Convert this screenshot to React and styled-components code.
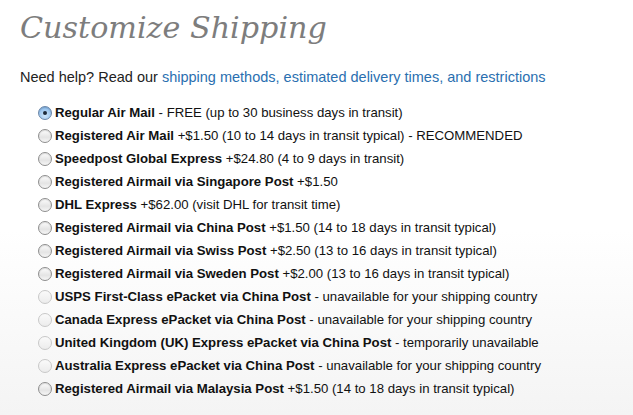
import React from "react";
import styled, { createGlobalStyle } from "styled-components";

const Global = createGlobalStyle`
  html, body { margin: 0; padding: 0; }
  body {
    width: 633px;
    height: 415px;
    overflow: hidden;
    background: linear-gradient(to bottom, #ffffff 0px, #ffffff 230px, #f4f4f4 415px);
    font-family: "Liberation Sans", Arial, sans-serif;
  }
`;

const Page = styled.div`
  padding: 7px 0 0 20px;
`;

const Title = styled.h1`
  margin: 0;
  font-family: "DejaVu Serif", Georgia, serif;
  font-style: italic;
  font-weight: normal;
  font-size: 30.2px;
  line-height: 42px;
  color: #7d7d7d;
`;

const Help = styled.p`
  margin: 19px 0 0 0;
  font-size: 14.5px;
  line-height: 18px;
  color: #222;
`;

const Link = styled.a`
  color: #2a6fb0;
  text-decoration: none;
`;

const List = styled.div`
  display: flex;
  flex-direction: column;
  margin: 15px 0 0 18px;
`;

const Row = styled.label`
  display: flex;
  align-items: center;
  height: 23px;
  font-size: 13.2px;
  color: #111;
  white-space: nowrap;
`;

const Text = styled.span``;

const Radio = styled.span`
  box-sizing: border-box;
  width: 14px;
  height: 14px;
  margin-right: 3px;
  border-radius: 50%;
  flex: none;
  position: relative;
  border: 1px solid ${(p) => (p.$checked ? "#6b86a8" : p.$disabled ? "#c8c8c8" : "#8e8e8e")};
  background: ${(p) =>
    p.$checked
      ? "radial-gradient(circle at 50% 70%, #cfe6fb 0%, #9cc6ef 60%, #6fa5dd 100%)"
      : p.$disabled
      ? "linear-gradient(to bottom, #fafafa, #ececec)"
      : "linear-gradient(to bottom, #fdfdfd 0%, #e4e4e4 60%, #f6f6f6 100%)"};
  box-shadow: ${(p) => (p.$disabled ? "none" : "inset 0 1px 1px rgba(0,0,0,0.12)")};
  &::after {
    content: "";
    display: ${(p) => (p.$checked ? "block" : "none")};
    position: absolute;
    left: 50%;
    top: 50%;
    width: 4px;
    height: 4px;
    margin: -2px 0 0 -2px;
    border-radius: 50%;
    background: #1d2a3a;
  }
`;

const Name = styled.b`
  font-weight: bold;
`;

const options = [
  { name: "Regular Air Mail", rest: " - FREE (up to 30 business days in transit)", checked: true },
  { name: "Registered Air Mail", rest: " +$1.50 (10 to 14 days in transit typical) - RECOMMENDED" },
  { name: "Speedpost Global Express", rest: " +$24.80 (4 to 9 days in transit)" },
  { name: "Registered Airmail via Singapore Post", rest: " +$1.50" },
  { name: "DHL Express", rest: " +$62.00 (visit DHL for transit time)" },
  { name: "Registered Airmail via China Post", rest: " +$1.50 (14 to 18 days in transit typical)" },
  { name: "Registered Airmail via Swiss Post", rest: " +$2.50 (13 to 16 days in transit typical)" },
  { name: "Registered Airmail via Sweden Post", rest: " +$2.00 (13 to 16 days in transit typical)" },
  { name: "USPS First-Class ePacket via China Post", rest: " - unavailable for your shipping country", disabled: true },
  { name: "Canada Express ePacket via China Post", rest: " - unavailable for your shipping country", disabled: true },
  { name: "United Kingdom (UK) Express ePacket via China Post", rest: " - temporarily unavailable", disabled: true },
  { name: "Australia Express ePacket via China Post", rest: " - unavailable for your shipping country", disabled: true },
  { name: "Registered Airmail via Malaysia Post", rest: " +$1.50 (14 to 18 days in transit typical)" },
];

export default function App() {
  return (
    <>
      <Global />
      <Page>
        <Title>Customize Shipping</Title>
        <Help>
          Need help? Read our{" "}
          <Link href="#">shipping methods, estimated delivery times, and restrictions</Link>
        </Help>
        <List>
          {options.map((o) => (
            <Row key={o.name}>
              <Radio $checked={o.checked} $disabled={o.disabled} />
              <Text>
                <Name>{o.name}</Name>
                {o.rest}
              </Text>
            </Row>
          ))}
        </List>
      </Page>
    </>
  );
}
